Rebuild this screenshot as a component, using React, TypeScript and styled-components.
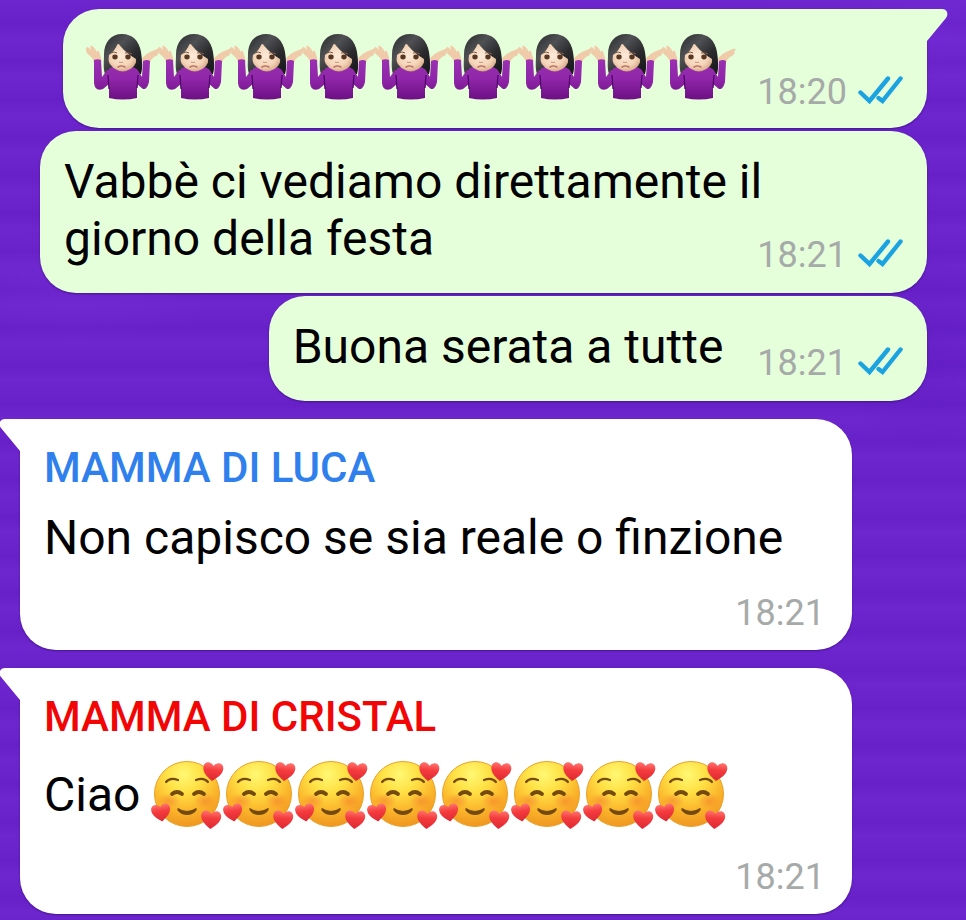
import React from 'react';
import styled, { createGlobalStyle } from 'styled-components';

const PageStyle = createGlobalStyle`
  *, *::before, *::after { box-sizing: border-box; }
  body {
    margin: 0;
    min-height: 100vh;
    font-family: Roboto, "Liberation Sans", sans-serif;
    color: #000;
    background-color: #6a22cb;
    background-image:
      radial-gradient(ellipse 140px 60px at 8% 31%, rgba(128, 56, 226, 0.2), transparent),
      radial-gradient(ellipse 120px 80px at 97% 3%, rgba(128, 56, 226, 0.2), transparent),
      radial-gradient(ellipse 90px 110px at 96% 38%, rgba(70, 10, 165, 0.12), transparent),
      repeating-linear-gradient(180deg, rgba(128, 56, 226, 0.14) 0, transparent 16px, rgba(70, 10, 165, 0.08) 24px, rgba(128, 56, 226, 0.14) 38px);
  }
`;

const Thread = styled.main`
  display: flex;
  flex-direction: column;
  gap: 18px;
  padding: 9px 39px 8px 20px;
  overflow: hidden;
`;

const Group = styled.section<{ $own?: boolean }>`
  display: flex;
  flex-direction: column;
  align-items: ${(p) => (p.$own ? 'flex-end' : 'flex-start')};
  gap: 3px;
`;

const Bubble = styled.article`
  position: relative;
  border-radius: 36px;
  box-shadow: 0 1px 2px rgba(25, 0, 70, 0.45);
`;

const OwnBubble = styled(Bubble)<{ $tail?: boolean }>`
  display: flex;
  align-items: flex-end;
  gap: ${(p) => (p.$tail ? 22 : 34)}px;
  max-width: calc(100% - 20px);
  padding: ${(p) => (p.$tail ? '23px 24px 24px' : '22px 24px 26px')};
  background: #e5ffdb;
  ${(p) => p.$tail && 'border-top-right-radius: 0;'}
`;

/* Long messages share one cell with their time, which sits beside the last line. */
const LongOwnBubble = styled(OwnBubble)`
  display: grid;
  grid-template-columns: 1fr;

  & > * {
    grid-area: 1 / 1;
  }

  & > p {
    padding-right: 120px;
  }
`;

const PeerBubble = styled(Bubble)`
  display: flex;
  flex-direction: column;
  width: calc(100% - 75px);
  padding: 24px 27px 16px 24px;
  border-top-left-radius: 0;
  background: #fff;
`;

const TailShape = styled.svg<{ $side: 'left' | 'right' }>`
  position: absolute;
  top: 0;
  ${(p) => p.$side}: -22px;
  width: 24px;
  height: 36px;
`;

const Sender = styled.h2<{ $color: string }>`
  margin: 0;
  font-size: 42px;
  font-weight: 500;
  line-height: 50px;
  color: ${(p) => p.$color};
`;

const Text = styled.p`
  min-width: 0;
  margin: 0;
  font-size: 48px;
  line-height: 57px;
`;

const PeerText = styled(Text)`
  display: flex;
  align-items: center;
  gap: 12px;
  padding: 16px 0 26px;
`;

const EmojiRow = styled.span`
  display: flex;
`;

const Emoji = styled.svg`
  display: block;
  flex: none;
  width: 72px;
  height: 72px;
  overflow: visible;
`;

const Meta = styled.footer`
  display: flex;
  flex: none;
  align-items: center;
  align-self: end;
  justify-self: end;
  gap: 11px;
  height: 24px;
`;

const PeerMeta = styled(Meta)`
  height: 42px;
`;

const Time = styled.time`
  font-size: 36px;
  line-height: 42px;
  color: #a6aaa8;
`;

const Ticks = styled.svg`
  width: 45px;
  height: 32px;
`;

function Tail({ side, color }: { side: 'left' | 'right'; color: string }) {
  return (
    <TailShape $side={side} viewBox="0 0 24 36" aria-hidden="true">
      <path
        fill={color}
        d={
          side === 'right'
            ? 'M0 0H17C22 0 24 5 21 9L2 32V36H0Z'
            : 'M24 0H7C2 0 0 5 3 9L22 32V36H24Z'
        }
      />
    </TailShape>
  );
}

function OwnMeta({ time }: { time: string }) {
  return (
    <Meta>
      <Time>{time}</Time>
      <Ticks viewBox="0 0 45 32" role="img" aria-label="Letto">
        <g fill="none" stroke="#1aa3e0" strokeWidth="4.4" strokeLinecap="round" strokeLinejoin="miter">
          <path d="M2.5 16.500L11.5 25L30 2.500" />
          <path d="M20.5 22L24.5 25L42.5 2.500" />
        </g>
      </Ticks>
    </Meta>
  );
}

function Shrug({ id }: { id: string }) {
  return (
    <Emoji viewBox="0 0 72 72">
      <defs>
        <linearGradient id={`${id}s`} x1="0" x2="0" y1="0" y2="1">
          <stop offset="0" stopColor="#9a32b2" />
          <stop offset=".5" stopColor="#8f25a8" />
          <stop offset="1" stopColor="#6c0f84" />
        </linearGradient>
        <radialGradient id={`${id}f`} cx=".45" cy=".45" r=".6">
          <stop offset="0" stopColor="#fdeada" />
          <stop offset=".65" stopColor="#f3d3b6" />
          <stop offset="1" stopColor="#d6a688" />
        </radialGradient>
        <linearGradient id={`${id}h`} x1="0" x2="1" y1="0" y2="1">
          <stop offset="0" stopColor="#29292b" />
          <stop offset=".35" stopColor="#505154" />
          <stop offset=".65" stopColor="#2c2c2f" />
          <stop offset="1" stopColor="#18181a" />
        </linearGradient>
      </defs>
      <path fill={`url(#${id}h)`} d="M35 2C24 2 17 10 17 23C17 30 16 36 18 42H54C56 36 55 27 54 20C52 8 45 2 35 2Z" />
      <g fill="#efcba9">
        <path d="M7 31C7 28 5 26 2 23C-2 20-2 15 1 15L4 18L3 14C6 13 8 17 10 20L11 18C13 20 13 23 14 26C15 28 14 29 14 32Z" />
        <path d="M56 31L55 27C56 24 60 22 63 20L70 17C74 16 73 19 71 19C73 21 70 24 67 25L64 28L63 31Z" />
      </g>
      <path fill={`url(#${id}s)`} d="M7 28C9 27 12 27 14 28L15 45L21 37Q28 33 36 34Q45 34 50 37L55 45L56 29Q60 27 63 29L62 50Q60 58 56 57L50 52V66Q36 69 22 66V52L16 57Q8 60 7 51Z" />
      <path d="M21 43L22 57M51 43L50 56" fill="none" stroke="#4f0869" strokeWidth="1.3" />
      <path d="M27 36Q36 43 44 36L41 34H30Z" fill="#cf9c80" />
      <path fill={`url(#${id}f)`} d="M21 21Q27 10 36 12Q48 15 50 25Q49 38 36 39Q24 38 21 28Z" />
      <path fill={`url(#${id}h)`} d="M18 38Q15 23 21 11Q27 2 37 3Q52 6 54 29L53 39L48 36Q50 31 49 27Q42 23 37 18Q33 14 31 11Q28 19 22 23Q21 28 22 35L22 38Z" />
      <path d="M24 21Q27 19 30 21M38 21Q41 20 45 22" fill="none" stroke="#7c5c48" strokeWidth="1" />
      <ellipse cx="28" cy="25" rx="2.7" ry="2.4" fill="#573722" />
      <ellipse cx="41" cy="25" rx="2.7" ry="2.4" fill="#573722" />
      <path d="M32 30Q34 31 36 30" fill="none" stroke="#d29e7d" strokeWidth="1.2" />
      <path d="M31 35Q34 33 38 35" fill="none" stroke="#bd7665" strokeWidth="1.6" strokeLinecap="round" />
    </Emoji>
  );
}

const HEART = 'M0 10C-4 7-10 3-10-3C-10-9-3-10 0-5C3-10 10-9 10-3C10 3 4 7 0 10Z';

function HeartFace({ id }: { id: string }) {
  return (
    <Emoji viewBox="0 0 72 72">
      <defs>
        <radialGradient id={`${id}y`} cx=".45" cy=".2" r=".8">
          <stop offset="0" stopColor="#fff873" />
          <stop offset=".35" stopColor="#ffe044" />
          <stop offset=".7" stopColor="#fbb52b" />
          <stop offset="1" stopColor="#ef9620" />
        </radialGradient>
        <radialGradient id={`${id}b`}>
          <stop offset="0" stopColor="#f4752d" stopOpacity=".5" />
          <stop offset="1" stopColor="#f4752d" stopOpacity="0" />
        </radialGradient>
        <linearGradient id={`${id}r`} x1="0" x2="0" y1="0" y2="1">
          <stop offset="0" stopColor="#ff7470" />
          <stop offset=".4" stopColor="#f53c3e" />
          <stop offset="1" stopColor="#dc2934" />
        </linearGradient>
      </defs>
      <circle cx="35" cy="36" r="32.5" fill={`url(#${id}y)`} stroke="#e9a12a" strokeWidth="1" />
      <ellipse cx="17" cy="43" rx="12" ry="8" fill={`url(#${id}b)`} />
      <ellipse cx="53" cy="43" rx="12" ry="8" fill={`url(#${id}b)`} />
      <g fill="none" stroke="#754a10" strokeLinecap="round">
        <path strokeWidth="2.2" d="M14 24Q18 19 26 22M44 22Q52 19 56 24" />
        <path strokeWidth="3.8" d="M20 36Q25 32 30 36M42 36Q47 32 52 36" />
      </g>
      <path fill="#754a10" d="M26 50Q35 56 44 50Q46 51 43 54Q40 57 35 57Q30 57 27 54Q24 51 26 50Z" />
      <g fill={`url(#${id}r)`}>
        <path transform="translate(61 13) rotate(6)" d={HEART} />
        <path transform="translate(9 54) rotate(-8) scale(.95)" d={HEART} />
        <path transform="translate(59 61) rotate(4)" d={HEART} />
      </g>
    </Emoji>
  );
}

const shrugs = Array.from({ length: 9 }, (_, i) => `shrug${i}`);
const hearts = Array.from({ length: 8 }, (_, i) => `heart${i}`);

export default function App() {
  return (
    <>
      <PageStyle />
      <Thread>
        <Group $own>
          <OwnBubble $tail>
            <EmojiRow role="img" aria-label="🤷🏻‍♀️ × 9">
              {shrugs.map((id) => <Shrug key={id} id={id} />)}
            </EmojiRow>
            <OwnMeta time="18:20" />
            <Tail side="right" color="#e5ffdb" />
          </OwnBubble>
          <LongOwnBubble>
            <Text>Vabbè ci vediamo direttamente il giorno della festa</Text>
            <OwnMeta time="18:21" />
          </LongOwnBubble>
          <OwnBubble>
            <Text>Buona serata a tutte</Text>
            <OwnMeta time="18:21" />
          </OwnBubble>
        </Group>
        <Group>
          <PeerBubble>
            <Tail side="left" color="#fff" />
            <Sender $color="#2f80ed">MAMMA DI LUCA</Sender>
            <PeerText>Non capisco se sia reale o finzione</PeerText>
            <PeerMeta><Time>18:21</Time></PeerMeta>
          </PeerBubble>
        </Group>
        <Group>
          <PeerBubble>
            <Tail side="left" color="#fff" />
            <Sender $color="#f20505">MAMMA DI CRISTAL</Sender>
            <PeerText>
              Ciao
              <EmojiRow role="img" aria-label="🥰 × 8">
                {hearts.map((id) => <HeartFace key={id} id={id} />)}
              </EmojiRow>
            </PeerText>
            <PeerMeta><Time>18:21</Time></PeerMeta>
          </PeerBubble>
        </Group>
      </Thread>
    </>
  );
}
